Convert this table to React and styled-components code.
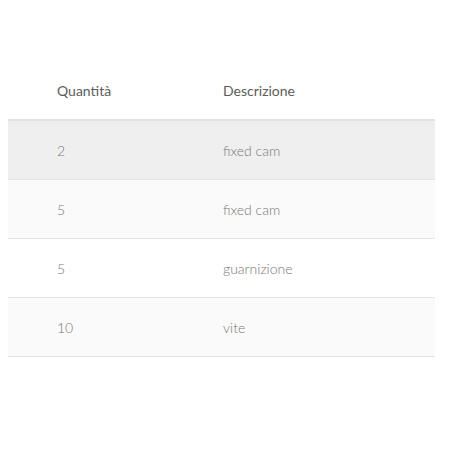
import styled, { createGlobalStyle } from "styled-components";

const GlobalStyle = createGlobalStyle`
  body {
    margin: 8px;
    background: #fff;
    font-family: Lato, "Open Sans", sans-serif;
  }
`;

const rows = [
  { qty: "2", desc: "fixed cam" },
  { qty: "5", desc: "fixed cam" },
  { qty: "5", desc: "guarnizione" },
  { qty: "10", desc: "vite" },
];

const App = () => {
  return (
    <>
      <GlobalStyle />
      <TableStyle>
        <HeadRow>
          <Cell $head>Quantità</Cell>
          <Cell $head>Descrizione</Cell>
        </HeadRow>
        {rows.map((r, i) => (
          <Row key={i} $bg={i === 0 ? "#efefef" : i % 2 ? "#fafafa" : "#fff"}>
            <Cell>{r.qty}</Cell>
            <Cell>{r.desc}</Cell>
          </Row>
        ))}
      </TableStyle>
    </>
  );
};

const TableStyle = styled.div`
  margin-top: 53px;
  width: 427px;
`;

const Row = styled.div`
  display: grid;
  grid-template-columns: 215px 1fr;
  height: 58px;
  align-items: center;
  background: ${(p) => p.$bg};
  border-bottom: 1px solid #e4e4e4;
`;

const HeadRow = styled(Row)`
  height: 58px;
  background: #fff;
  border-bottom: 2px solid #e2e2e2;
  box-shadow: 0 1px 1px rgba(0, 0, 0, 0.04);
`;

const Cell = styled.div`
  font-size: 14px;
  font-weight: ${(p) => (p.$head ? 400 : 300)};
  color: ${(p) => (p.$head ? "#5c5c5c" : "#777")};

  &:first-child {
    padding-left: 49px;
  }
`;

export default App;
